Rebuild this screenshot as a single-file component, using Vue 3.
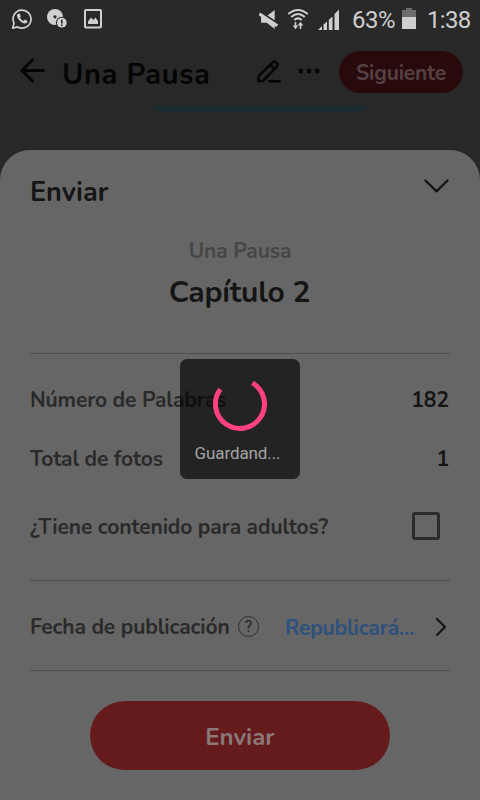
<script setup>
const title = 'Una Pausa'
const stats = [
  { label: 'Número de Palabras', value: '182', key: 'words' },
  { label: 'Total de fotos', value: '1', key: 'photos' },
]
</script>

<template>
  <main class="screen">
    <header class="statusbar">
      <div class="notifications">
        <svg width="22" height="22" viewBox="0 0 22 22" fill="none">
          <path d="M1.7 20.2 3 15.2A9 9 0 1 1 6.5 18.9Z" stroke="#cfcfcf" stroke-width="1.7" stroke-linejoin="round" />
          <path d="M7.2 5.7 8.6 5.5 9.8 8.2 8.8 9.5Q10.1 12 12.7 12.9L14 11.6 16.5 12.9Q16.6 15 14.2 15.4 11.6 15.5 8.5 12.4 5.7 9.3 6 7.2 6.4 6 7.2 5.7Z" fill="#cfcfcf" />
        </svg>
        <svg width="22" height="22" viewBox="0 0 22 22">
          <circle cx="8" cy="9" r="8" fill="#cfcfcf" />
          <circle cx="8" cy="8.8" r="1.6" fill="#292929" />
          <circle cx="14.8" cy="14.7" r="5.9" fill="#292929" />
          <circle cx="14.8" cy="14.7" r="4.9" fill="#cfcfcf" />
          <path d="M14.8 11.4v4M14.8 16.5v1.6" stroke="#292929" stroke-width="1.6" />
        </svg>
        <svg width="20" height="22" viewBox="0 0 20 22">
          <rect x="2" y="2" width="16" height="17.6" rx="1" fill="none" stroke="#cfcfcf" stroke-width="2" />
          <path d="M5 16V13.5L8 9.5 10.4 12 12.4 9.6 15 13V16Z" fill="#cfcfcf" />
        </svg>
      </div>
      <div class="system">
        <svg class="mute" width="20" height="21" viewBox="0 0 20 21" fill="#cfcfcf">
          <path d="M15.7 1V11.2L8.5 6.5Z" />
          <path d="M1.2 3.6 19.2 15.4 17.4 18.1-.4 6.2Z" />
          <path d="M2.1 7.1V13.7H7.7L15.7 20V16Z" />
        </svg>
        <svg class="wifi" width="22" height="22" viewBox="0 0 22 22" fill="none" stroke="#cfcfcf" stroke-width="2">
          <path d="M1.2 6Q11-2.1 20.8 6M4.2 9Q11 3.1 17.8 9M7.3 12Q11 8.7 14.7 12" />
          <path d="M8.5 14V19M13.5 21V16" stroke-width="1.6" />
          <path d="M5.7 17.5H11.3L8.5 21.2ZM10.7 17.5H16.3L13.5 13.7Z" fill="#cfcfcf" stroke="none" />
        </svg>
        <svg class="signal" width="22" height="21" viewBox="0 0 22 21" fill="#cfcfcf">
          <path d="M0 21 4 17V21ZM5.5 21V15.6L9 12.5V21ZM10.8 21V10.7L14.5 7.5V21ZM16.5 21V5L21 .5V21Z" />
        </svg>
        <span class="percent">63%</span>
        <svg class="battery" width="14" height="21" viewBox="0 0 14 21">
          <path d="M4 0H10V2H14V9H0V2H4Z" fill="#6c6c6c" />
          <path d="M0 9H14V21H0Z" fill="#cfcfcf" />
        </svg>
        <time>1:38</time>
      </div>
    </header>

    <nav class="toolbar">
      <svg class="back" width="25" height="25" viewBox="0 0 25 25" fill="none" stroke="#050505" stroke-width="3" stroke-linecap="round" stroke-linejoin="round">
        <path d="M12.5 2 2 12.5 12.5 23M2.5 12.5H23.5" />
      </svg>
      <h1>{{ title }}</h1>
      <svg class="edit" width="24" height="23" viewBox="0 0 24 23" fill="none" stroke="#050505" stroke-width="2.4" stroke-linecap="round" stroke-linejoin="round">
        <path d="M1.3 21.3 1.7 16.2 15.5 2.4Q17 .9 18.8 2.2L20 3.4Q21.3 5.2 19.8 6.8L6.2 20.7ZM13.2 4.8 17.5 9M12 21.3H23" />
      </svg>
      <svg class="more" width="22" height="6" viewBox="0 0 22 6" fill="#050505">
        <circle cx="2.8" cy="3" r="2.4" /><circle cx="11" cy="3" r="2.4" /><circle cx="19.2" cy="3" r="2.4" />
      </svg>
      <button class="next">Siguiente</button>
    </nav>
    <div class="backdrop">
      <svg width="218" height="7" viewBox="0 0 218 7"><path d="M0 0H218Q213 6.5 207 6.5H11Q5 6.5 0 0Z" fill="#1b2a2e" /></svg>
    </div>

    <section class="sheet">
      <div class="sheet-head">
        <h2>Enviar</h2>
        <svg width="25" height="14" viewBox="0 0 25 14" fill="none" stroke="#151515" stroke-width="2.4" stroke-linecap="round" stroke-linejoin="round">
          <path d="M1.5 1.5 12.5 12.3 23.5 1.5" />
        </svg>
      </div>
      <div class="chapter">
        <p>{{ title }}</p>
        <h3>Capítulo 2</h3>
      </div>
      <div class="details">
        <div v-for="item in stats" :key="item.key" class="stat">
          <span class="label">{{ item.label }}</span>
          <strong>{{ item.value }}</strong>
        </div>
        <div class="adult">
          <span class="label question">¿Tiene contenido para adultos?</span>
          <span class="checkbox"></span>
        </div>
      </div>
      <div class="publish">
        <span class="label date">Fecha de publicación</span>
        <span class="help">?</span>
        <span class="link">Republicará...</span>
        <svg width="12" height="20" viewBox="0 0 12 20" fill="none" stroke="#171717" stroke-width="2.3" stroke-linecap="round" stroke-linejoin="round">
          <path d="M2 2 10 10 2 18" />
        </svg>
      </div>
      <button class="submit">Enviar</button>
    </section>

    <div class="loading">
      <svg width="54" height="54" viewBox="0 0 54 54" fill="none" stroke="#ff4081" stroke-width="5">
        <path d="M7.4 12.2A24.5 24.5 0 1 0 39.5 5.9" />
      </svg>
      <span>Guardand...</span>
    </div>
  </main>
</template>

<style>
body { background: #282828; }
</style>

<style scoped>
* { box-sizing: border-box; }
h1, h2, h3, p { margin: 0; white-space: nowrap; }
button { border: 0; padding: 0; font: inherit; }
svg { display: block; flex: none; }
.screen {
  position: relative;
  width: 480px;
  height: 800px;
  overflow: hidden;
  display: flex;
  flex-direction: column;
  background: #282828;
  font-family: Nunito, Lato, "Noto Sans", sans-serif;
  font-weight: 700;
}
.statusbar {
  height: 38px;
  padding: 0 11px 0 11px;
  display: flex;
  justify-content: space-between;
  align-items: center;
  background: #292929;
  color: #cfcfcf;
  font: 400 24px/38px Roboto, sans-serif;
}
.notifications { display: flex; gap: 14px; }
.system { display: flex; align-items: center; }
.mute { margin-right: -1px; }
.wifi { margin-left: 9px; }
.signal { margin-left: 9px; }
.percent { margin: 2px 0 0 12px; letter-spacing: -.5px; width: 43px; }
.battery { margin: 0 0 1px 7px; }
time { margin: 2px 0 0 11px; width: 42px; letter-spacing: -.7px; }
.toolbar {
  height: 68px;
  padding: 0 17px 0 20px;
  display: flex;
  align-items: center;
  color: #050505;
}
.back { margin-bottom: 3px; }
.toolbar h1 { width: 210px; padding: 5px 0 0 17px; font-size: 29px; letter-spacing: .6px; line-height: 36px; }
.edit { margin: 0 0 2px 2px; }
.more { margin: 0 0 2px 17px; }
.next {
  margin-left: auto;
  width: 124px;
  height: 42px;
  padding-top: 2px;
  border-radius: 21px;
  background: #280a0c;
  color: #554144;
  font-size: 21px;
  letter-spacing: -.2px;
}
.backdrop { height: 44px; flex: none; display: flex; justify-content: center; padding-left: 40px; }
.sheet {
  flex: 1;
  padding: 0 30px;
  background: #666;
  border-radius: 30px 30px 0 0;
  display: flex;
  flex-direction: column;
}
.sheet-head { height: 82px; display: flex; justify-content: space-between; align-items: center; color: #151515; }
.sheet-head h2 { font-size: 27px; line-height: 36px; padding-top: 4px; }
.sheet-head svg { margin: 0 1px 11px 0; }
.chapter { height: 121px; flex: none; text-align: center; padding-top: 4px; }
.chapter p { font-size: 21px; letter-spacing: -.1px; line-height: 30px; color: #464646; }
.chapter h3 { font-size: 30px; letter-spacing: -.2px; line-height: 40px; margin-top: 7px; padding-right: 1px; color: #151515; }
.details { height: 228px; flex: none; border-top: 1px solid #4e5050; border-bottom: 1px solid #4e5050; padding-top: 16px; }
.stat { height: 59px; display: flex; align-items: center; justify-content: space-between; }
.label { font-size: 21px; letter-spacing: -.13px; color: #2a2a2a; white-space: nowrap; }
.stat strong { font-size: 21px; font-weight: 700; color: #151515; padding-right: 1px; }
.adult { height: 76px; display: flex; align-items: center; justify-content: space-between; }
.question { padding-top: 2px; }
.checkbox { width: 28px; height: 28px; margin-right: 10px; border: 3px solid #2b2b2b; border-radius: 3px; }
.publish { height: 90px; flex: none; display: flex; align-items: center; border-bottom: 1px solid #4e5050; padding-top: 2px; }
.date { width: 208px; }
.help {
  width: 21px;
  height: 21px;
  border: 1px solid #2d2d2d;
  border-radius: 50%;
  text-align: center;
  font: 400 16px/20px Roboto, sans-serif;
  color: #222;
}
.link { width: 146px; padding: 2px 0 0 26px; font-size: 21px; letter-spacing: -.17px; color: #2d507c; white-space: nowrap; }
.publish svg { margin: 0 3px 0 auto; }
.submit {
  align-self: center;
  width: 300px;
  height: 69px;
  margin-top: 30px;
  padding-top: 3px;
  border-radius: 35px;
  background: #651b1c;
  color: #8a7778;
  font-size: 24px;
}
.loading {
  position: absolute;
  left: 180px;
  top: 359px;
  width: 120px;
  height: 120px;
  border-radius: 7px;
  background: rgba(0, 0, 0, .66);
  display: flex;
  flex-direction: column;
  align-items: center;
  padding-top: 18px;
  color: #a3a3a3;
  font: 400 17px/24px Roboto, sans-serif;
}
.loading span { margin-top: 10px; padding-right: 5px; letter-spacing: -.1px; }
</style>
